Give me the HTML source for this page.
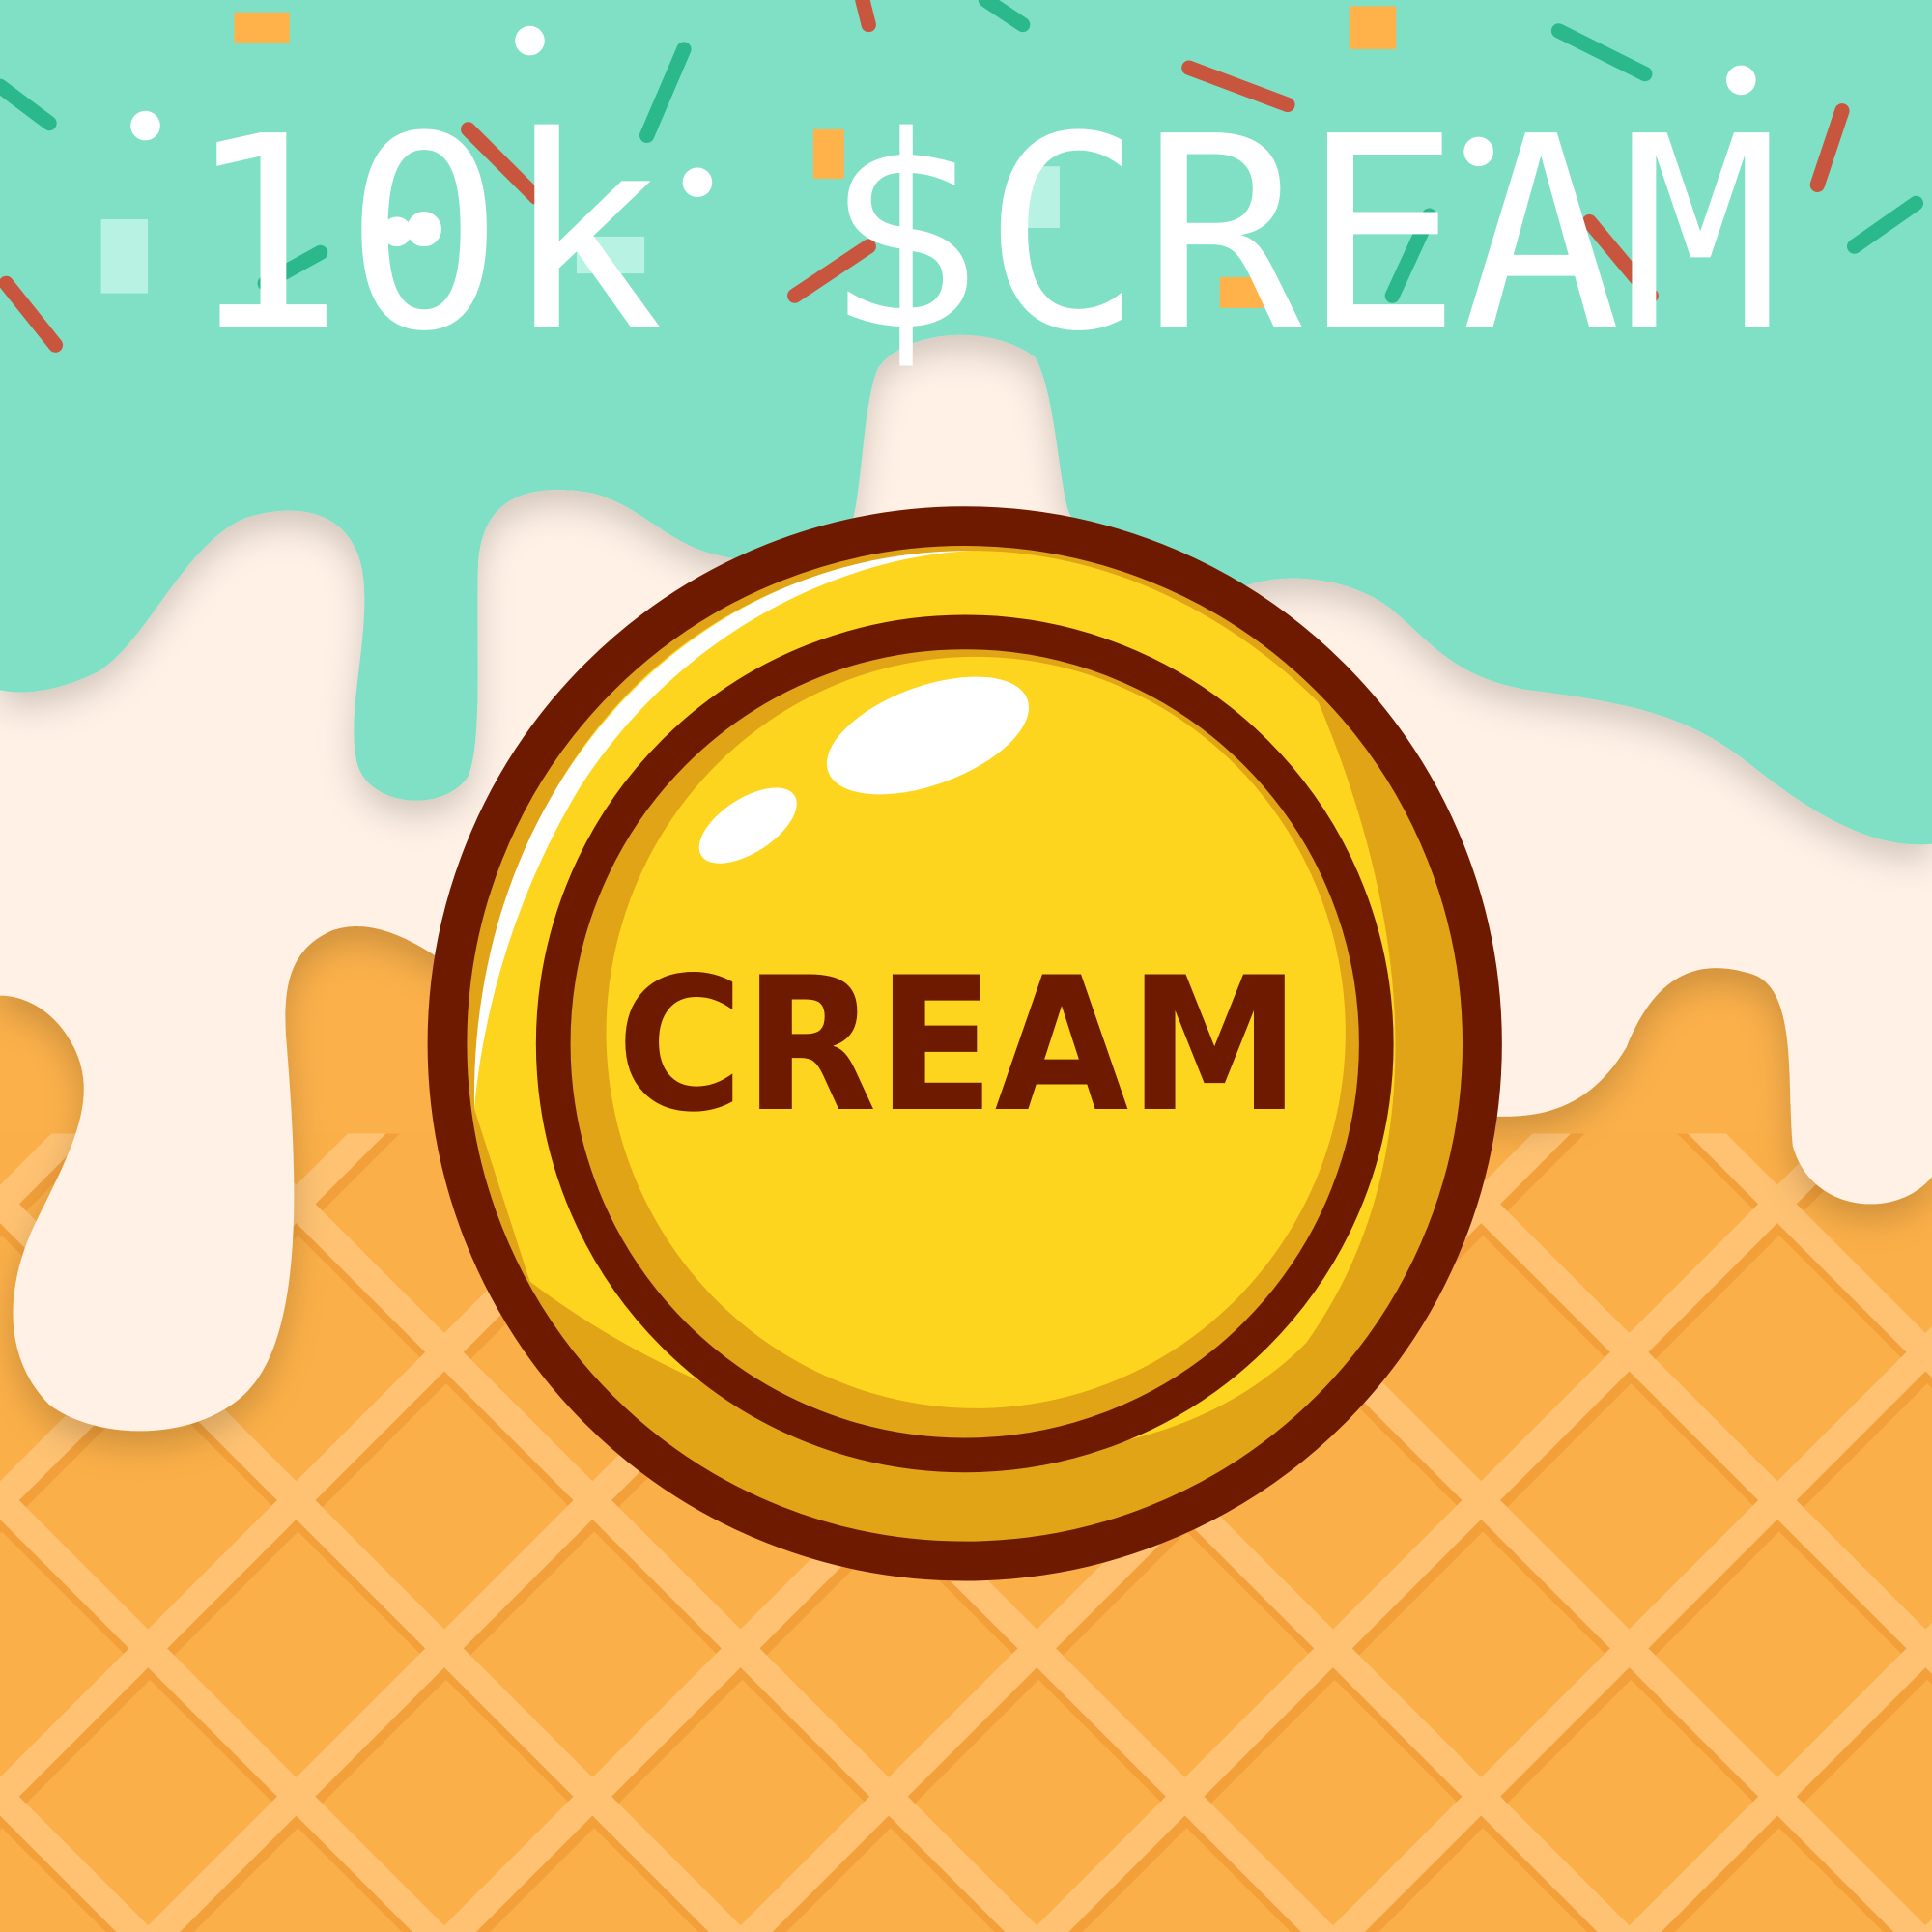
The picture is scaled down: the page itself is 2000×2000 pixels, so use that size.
<!DOCTYPE html>
<html><head><meta charset="utf-8"><style>
html,body{margin:0;padding:0;width:2000px;height:2000px;overflow:hidden;background:#FBB04A}
svg{display:block}
</style></head><body>
<svg width="2000" height="2000" viewBox="0 0 1568 1568" xmlns="http://www.w3.org/2000/svg">
<defs>
<pattern id="w" width="170" height="170" patternUnits="userSpaceOnUse" patternTransform="rotate(45 0 0)">
<rect width="170" height="170" fill="#FBAF48"/>
<rect x="0" y="0" width="170" height="22" fill="#FFC272"/>
<rect x="0" y="0" width="22" height="170" fill="#FFC272"/>
<rect x="22" y="22" width="8" height="148" fill="#F3A03A"/>
<rect x="22" y="22" width="148" height="6" fill="#F3A03A"/>
</pattern>
<filter id="sh" x="-10%" y="-10%" width="120%" height="130%"><feDropShadow dx="0" dy="12" stdDeviation="14" flood-color="#000" flood-opacity="0.18"/></filter>
</defs>
<rect width="1568" height="1568" fill="url(#w)"/>
<rect y="0" width="1568" height="920" fill="#FBB04A"/>
<!-- cream -->
<path filter="url(#sh)" fill="#FFF1E6" d="M0 0 H1568 V955 C1540 990 1470 985 1455 930 C1450 880 1460 800 1420 790 C1370 775 1340 800 1320 850 C1290 900 1250 910 1200 905 L360 780 C330 760 300 745 270 755 C235 770 230 800 232 840 C240 940 250 1080 200 1130 C160 1170 80 1170 40 1140 C0 1100 5 1040 30 990 C60 930 80 890 60 850 C45 820 20 808 0 808 Z"/>
<!-- mint -->
<path filter="url(#sh)" fill="#7FE0C6" d="M0 0 H1568 V685 C1520 690 1470 660 1420 620 C1370 580 1320 570 1240 560 C1180 550 1160 520 1130 495 C1100 470 1040 460 1000 480 C950 500 900 440 870 420 C860 410 858 320 840 290 C800 260 730 270 712 300 C700 330 700 400 690 430 C660 460 620 460 580 450 C540 440 520 410 480 400 C420 390 390 410 388 460 C386 520 392 600 380 630 C360 660 300 655 290 620 C280 580 300 520 295 470 C290 420 250 405 200 420 C150 440 120 520 80 545 C50 560 20 565 0 560 Z"/>
<!-- sprinkles -->
<g stroke-linecap="round" stroke-width="12">
<path d="M0 70 L40 100" stroke="#2BB88B"/>
<path d="M380 105 L435 160" stroke="#C8553D"/>
<path d="M525 110 L555 40" stroke="#2BB88B"/>
<path d="M645 240 L705 200" stroke="#C8553D"/>
<path d="M965 55 L1045 85" stroke="#C8553D"/>
<path d="M1265 25 L1335 60" stroke="#2BB88B"/>
<path d="M1475 150 L1495 90" stroke="#C8553D"/>
<path d="M1505 200 L1555 165" stroke="#2BB88B"/>
<path d="M5 230 L45 280" stroke="#C8553D"/>
<path d="M1290 180 L1340 240" stroke="#C8553D"/>
<path d="M800 0 L830 20" stroke="#2BB88B"/>
<path d="M700 0 L705 20" stroke="#C8553D"/>
<path d="M215 230 L260 205" stroke="#2BB88B"/>
<path d="M1130 240 L1160 175" stroke="#2BB88B"/>
</g>
<g fill="#FFB24A"><rect x="190" y="10" width="45" height="25"/><rect x="1095" y="5" width="38" height="35"/><rect x="990" y="225" width="35" height="25"/><rect x="660" y="105" width="25" height="40"/></g>
<g fill="#B7F2E2"><rect x="82" y="178" width="38" height="60"/><rect x="468" y="192" width="55" height="30"/><rect x="830" y="135" width="30" height="50"/></g>
<g fill="#fff"><circle cx="118" cy="102" r="12"/><circle cx="430" cy="33" r="12"/><circle cx="566" cy="148" r="12"/><circle cx="1413" cy="65" r="12"/><circle cx="1200" cy="123" r="12"/><circle cx="322" cy="188" r="12"/></g>
<!-- coin -->
<circle cx="783" cy="847" r="420" fill="#E0A416" stroke="#6E1A00" stroke-width="32"/>
<path d="M385 900 C390 620 560 450 790 447 C900 447 1000 500 1070 570 C1150 760 1160 950 1060 1090 C900 1250 600 1170 430 1040 Z" fill="#FDD51F"/>
<path d="M385 900 C380 640 560 445 790 447 C700 450 560 500 470 640 C410 740 390 840 385 900 Z" fill="#fff"/>
<circle cx="783" cy="847" r="334" fill="#E0A416" stroke="#6E1A00" stroke-width="28"/>
<ellipse cx="792" cy="838" rx="300" ry="305" fill="#FDD51F"/>
<ellipse cx="753" cy="597" rx="86" ry="40" transform="rotate(-20 753 597)" fill="#fff"/>
<ellipse cx="607" cy="670" rx="45" ry="22" transform="rotate(-33 607 670)" fill="#fff"/>
<text x="778" y="900" text-anchor="middle" font-family="'DejaVu Sans',sans-serif" font-weight="bold" font-size="150" fill="#6E1A00" textLength="555" lengthAdjust="spacingAndGlyphs">CREAM</text>
<!-- title -->
<text x="150" y="265" font-family="'DejaVu Sans Mono',monospace" font-size="216" fill="#fff" textLength="1295" lengthAdjust="spacingAndGlyphs">10k $CREAM</text>
</svg>
</body></html>
